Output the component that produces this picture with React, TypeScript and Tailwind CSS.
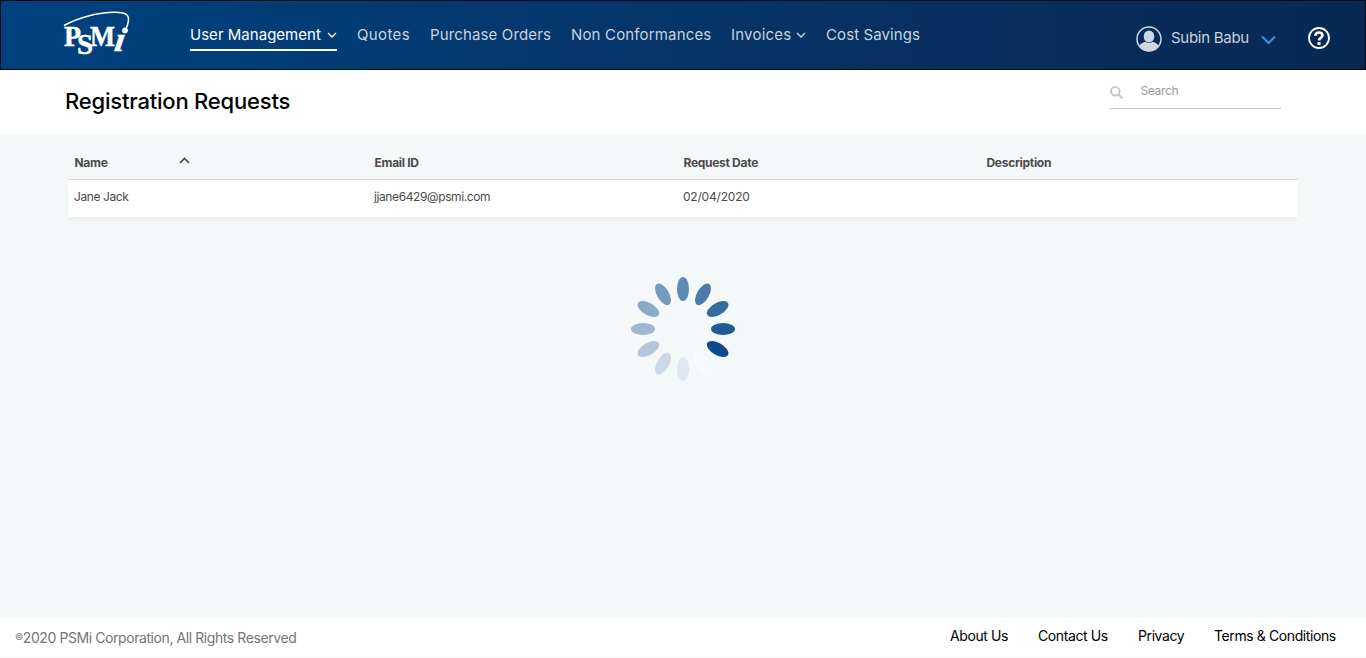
const NAV = [
  { label: 'User Management', width: 'w-[147px]', track: 'tracking-[0.02px]', menu: true, active: true },
  { label: 'Quotes', width: 'w-[53px]', track: 'tracking-[0.38px]' },
  { label: 'Purchase Orders', width: 'w-[121px]', track: 'tracking-[0.14px]' },
  { label: 'Non Conformances', width: 'w-[140px]', track: 'tracking-[0.16px]' },
  { label: 'Invoices', width: 'w-[75px]', track: 'tracking-[0.22px]', menu: true },
  { label: 'Cost Savings', width: 'w-[94px]', track: 'tracking-[0.1px]' },
];

const PETALS = [
  '#5f8bb3', '#4b7baa', '#376b9d', '#215b95', '#0b4b87', '#f7fafc',
  '#dfe7ef', '#cbd8e5', '#b4c6d9', '#9fb6d1', '#8ba9c8', '#7799bd',
];

function Logo() {
  return (
    <svg width="70" height="56" viewBox="0 0 70 56" fill="#fff" stroke="#fff" strokeWidth="0.5" fontFamily="'Liberation Serif', serif" fontWeight="700">
      <text x="1" y="37" fontSize="29" textLength="17" lengthAdjust="spacingAndGlyphs">P</text>
      <text x="14" y="44.500" fontSize="29" textLength="16" lengthAdjust="spacingAndGlyphs">S</text>
      <text x="27" y="37" fontSize="29" textLength="25" lengthAdjust="spacingAndGlyphs">M</text>
      <text transform="translate(50.500 42) skewX(-9)" fontSize="35" fontStyle="italic" textLength="10" lengthAdjust="spacingAndGlyphs">ı</text>
      <path d="M1 16.500C15 8.500 35 3.300 52 3.300C63 3.300 66.500 6 65.300 12.500C64.800 15.500 64 18 62.500 21" fill="none" strokeWidth="1.500" />
      <circle cx="62" cy="21.500" r="2.700" />
    </svg>
  );
}

function Chevron() {
  return (
    <svg className="shrink-0" width="10" height="7" viewBox="0 0 10 7" fill="none" stroke="currentColor" strokeWidth="1.400">
      <path d="M1 1l4 4 4-4" />
    </svg>
  );
}

function Spinner() {
  return (
    <svg width="104" height="104" viewBox="-52 -52 104 104">
      {PETALS.map((color, i) => (
        <ellipse key={i} cx="0" cy="-40" rx="6" ry="12" fill={color} transform={`rotate(${i < 5 ? i * 30 : i * 30})`}
          stroke={i === 5 ? '#fff' : 'none'} strokeWidth="0.700" />
      ))}
    </svg>
  );
}

export default function App() {
  return (
    <div className="flex h-[658px] w-[1366px] flex-col overflow-hidden bg-white font-['Inter','Liberation_Sans',sans-serif] whitespace-nowrap">
      <header className="flex h-[70px] shrink-0 border border-[#070b12] bg-linear-to-r from-[#00427f] to-[#082853] pl-[62px] text-[#c9d3df]">
        <div className="w-[127px] pt-[8px]"><Logo /></div>
        <nav className="flex gap-5 pt-[22px] text-[15px] leading-[20px]">
          {NAV.map((item) => (
            <a key={item.label} className={`flex h-[28px] justify-between pt-[2px] ${item.width} ${item.track} ${item.active ? 'border-b-2 border-white text-white' : 'border-b-2 border-transparent'}`}>
              <span>{item.label}</span>
              {item.menu && <span className="pt-[7px]"><Chevron /></span>}
            </a>
          ))}
        </nav>
        <div className="ml-auto flex h-[74px] items-center pr-[34px]">
          <svg className="mt-px" width="26" height="26" viewBox="0 0 26 26">
            <circle cx="13" cy="13" r="12" fill="none" stroke="#d0d7e0" strokeWidth="1.500" />
            <path d="M3.500 20C4.500 17.500 7 16.500 9.500 15.800C12 17.500 14 17.500 16.500 15.800C19 16.500 21.500 17.500 22.500 20C18 27 8 27 3.500 20Z" fill="#d0d7e0" />
            <ellipse cx="13" cy="10.600" rx="5.300" ry="6" fill="#d0d7e0" />
          </svg>
          <span className="ml-[9px] w-[88px] text-[15px] leading-5 tracking-[-0.280px]">Subin Babu</span>
          <svg className="mt-[3px] ml-[2px]" width="15" height="10" viewBox="0 0 15 10" fill="none" stroke="#3295de" strokeWidth="2">
            <path d="M1 1.500l6.500 6.500L14 1.500" />
          </svg>
          <svg className="ml-[32px]" width="23" height="23" viewBox="0 0 23 23" fill="none" stroke="#fff">
            <circle cx="11" cy="11" r="10" strokeWidth="1.800" />
            <path d="M7.500 8.800C7.500 4.500 14.500 4.500 14.500 8.300C14.500 10.800 11 10.800 11 13.600" strokeWidth="2.700" />
            <path d="M11 15v3" strokeWidth="3" />
          </svg>
        </div>
      </header>

      <section className="flex h-[65px] shrink-0 justify-between pr-[85px] pl-[65px]">
        <h1 className="pt-[16px] text-[22px] leading-[30px] font-medium tracking-[-0.200px] text-black">Registration Requests</h1>
        <label className="flex h-[39px] w-[171px] border-b border-[#c4c4c4] pt-[11px] text-[12px] leading-5 text-[#999]">
          <svg className="mt-[5px] mr-[17.500px]" width="13" height="13" viewBox="0 0 13 13" fill="none" stroke="#c8c8c8" strokeWidth="2">
            <circle cx="5.300" cy="5.300" r="4.300" />
            <path d="M8.500 8.500l4 4" />
          </svg>
          <span className="tracking-[-0.350px]">Search</span>
        </label>
      </section>

      <main className="flex min-h-0 flex-1 flex-col items-center bg-[#f4f8f9] text-[12px] text-[#4a4a4a]">
        <div className="w-[1230px]">
          <div className="grid h-[45px] grid-cols-[300px_309px_303px_1fr] border-b border-[#d8dede] pt-[18px] pl-[6.500px] leading-5 font-bold tracking-[-0.300px]">
            <span className="flex">
              <span className="w-[104px]">Name</span>
              <svg className="mt-[4px]" width="11" height="7" viewBox="0 0 11 7" fill="none" stroke="currentColor" strokeWidth="1.700">
                <path d="M1 6l4.500-4.500L10 6" />
              </svg>
            </span>
            <span>Email ID</span>
            <span>Request Date</span>
            <span>Description</span>
          </div>
          <div className="grid h-[37px] grid-cols-[300px_309px_303px_1fr] bg-white pt-[7px] pl-[6px] leading-5 shadow-[0_3px_4px_rgba(0,0,0,0.035)]">
            <span className="tracking-[-0.400px]">Jane Jack</span>
            <span className="tracking-[-0.400px]">jjane6429@psmi.com</span>
            <span className="tracking-[-0.200px]">02/04/2020</span>
            <span />
          </div>
        </div>
        <div className="mt-[60px]"><Spinner /></div>
      </main>

      <footer className="flex h-[41px] shrink-0 items-center justify-between border-b border-[#f1f3f3] bg-white pr-[30px] pl-[15px] text-[14px] leading-5">
        <span className="w-[282px] pt-px tracking-[-0.420px] text-[#757575]"><sup className="-top-[3px] text-[9px] leading-none">©</sup>2020 PSMi Corporation, All Rights Reserved</span>
        <nav className="flex gap-[30px] pb-[2px] tracking-[-0.400px] text-black">
          <a className="w-[58px]">About Us</a>
          <a className="w-[70px]">Contact Us</a>
          <a className="w-[46px]">Privacy</a>
          <a className="w-[122px]">Terms &amp; Conditions</a>
        </nav>
      </footer>
    </div>
  );
}
